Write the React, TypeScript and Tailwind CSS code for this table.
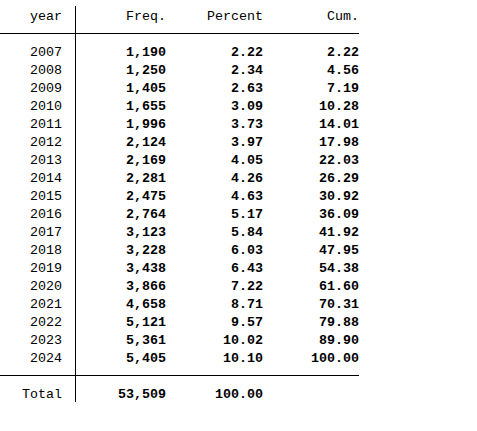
import React from "react";

const data: [string, string, string, string][] = [
  ["2007", "1,190", "2.22", "2.22"],
  ["2008", "1,250", "2.34", "4.56"],
  ["2009", "1,405", "2.63", "7.19"],
  ["2010", "1,655", "3.09", "10.28"],
  ["2011", "1,996", "3.73", "14.01"],
  ["2012", "2,124", "3.97", "17.98"],
  ["2013", "2,169", "4.05", "22.03"],
  ["2014", "2,281", "4.26", "26.29"],
  ["2015", "2,475", "4.63", "30.92"],
  ["2016", "2,764", "5.17", "36.09"],
  ["2017", "3,123", "5.84", "41.92"],
  ["2018", "3,228", "6.03", "47.95"],
  ["2019", "3,438", "6.43", "54.38"],
  ["2020", "3,866", "7.22", "61.60"],
  ["2021", "4,658", "8.71", "70.31"],
  ["2022", "5,121", "9.57", "79.88"],
  ["2023", "5,361", "10.02", "89.90"],
  ["2024", "5,405", "10.10", "100.00"],
];

function Row({ a, b, c, d, bold = true }: { a: string; b: string; c: string; d: string; bold?: boolean }) {
  return (
    <div className="flex h-[18px]">
      <div className="w-[75px] pr-[13px] pt-[2px] text-right">{a}</div>
      <div className={`flex w-[284px] border-l border-black pt-[2px] ${bold ? "font-bold" : ""}`}>
        <div className="w-[90px] text-right">{b}</div>
        <div className="w-[97px] text-right">{c}</div>
        <div className="w-[96px] text-right">{d}</div>
      </div>
    </div>
  );
}

function Sep() {
  return (
    <div className="flex h-[18px] items-center">
      <div className="w-[75px] h-px bg-black" />
      <div className="flex h-full w-[284px] items-center border-l border-black">
        <div className="h-px w-[283px] bg-black" />
      </div>
    </div>
  );
}

export default function App() {
  return (
    <div className="h-[431px] w-[477px] bg-white pt-[6px] font-['Liberation_Mono',monospace] text-[13.33px] leading-[18px] text-black">
      <Row a="year" b="Freq." c="Percent" d="Cum." bold={false} />
      <Sep />
      {data.map((r) => (
        <Row key={r[0]} a={r[0]} b={r[1]} c={r[2]} d={r[3]} />
      ))}
      <Sep />
      <Row a="Total" b="53,509" c="100.00" d="" />
    </div>
  );
}
